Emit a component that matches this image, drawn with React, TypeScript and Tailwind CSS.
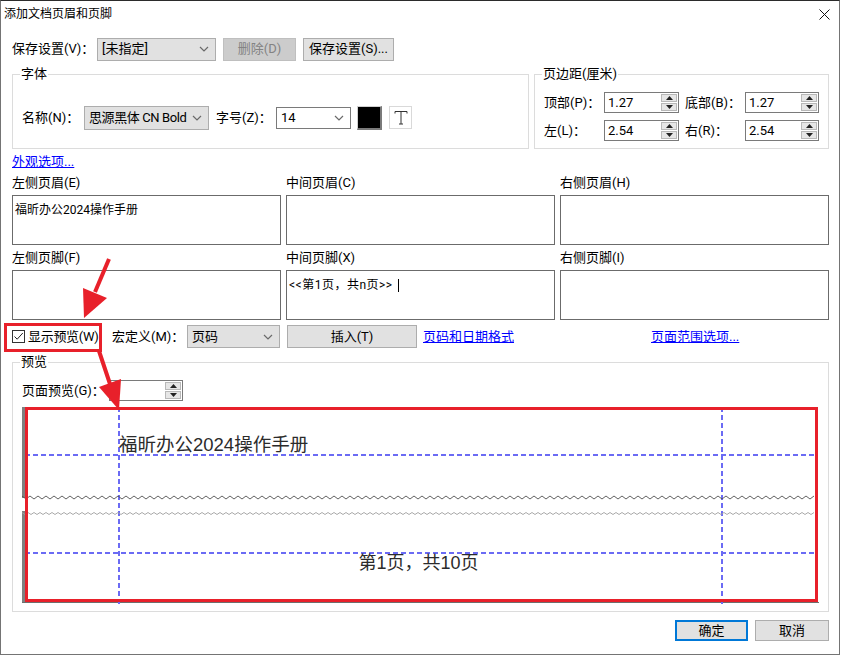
import React from 'react';

const Chevron = () => (
  <svg width="10" height="6" viewBox="0 0 10 6" className="shrink-0">
    <polyline points="1,1 5,5 9,1" fill="none" stroke="#6a6a6a" strokeWidth="1.2" />
  </svg>
);

const Tri = ({ up }: { up?: boolean }) => (
  <svg width="7" height="4" viewBox="0 0 7 4">
    <polygon points={up ? '0,4 7,4 3.5,0' : '0,0 7,0 3.5,4'} fill="#222" />
  </svg>
);

const Select = ({ text, className, textClass = '' }: { text: string; className: string; textClass?: string }) => (
  <div className={`flex items-center justify-between bg-[#e1e1e1] border border-[#adadad] pl-[4px] pr-[6px] ${className}`}>
    <span className={`whitespace-nowrap ${textClass}`}>{text}</span>
    <Chevron />
  </div>
);

const Button = ({ text, className }: { text: string; className: string }) => (
  <div className={`flex items-center justify-center bg-[#e1e1e1] border border-[#adadad] ${className}`}>{text}</div>
);

const Spin = ({ value, className }: { value: string; className: string }) => (
  <div className={`flex bg-white border border-[#7a7a7a] ${className}`}>
    <span className="flex-1 pl-[3px] text-[13px] leading-[19px]">{value}</span>
    <div className="w-[17px] flex flex-col gap-[1px] py-[1px] pr-[1px]">
      <div className="flex-1 flex items-center justify-center bg-[#e6e6e6] border border-[#b8b8b8]">
        <Tri up />
      </div>
      <div className="flex-1 flex items-center justify-center bg-[#e6e6e6] border border-[#b8b8b8]">
        <Tri />
      </div>
    </div>
  </div>
);

const Legend = ({ text }: { text: string }) => (
  <span className="absolute -top-[9px] left-[7px] bg-white px-[1px] leading-[16px]">{text}</span>
);

const zigzag = (y: number, amp: number, from: number, to: number, step: number) => {
  const pts: string[] = [];
  let up = true;
  for (let x = from; x <= to; x += step / 2) {
    pts.push(`${x},${up ? y - amp : y + amp}`);
    up = !up;
  }
  return pts.join(' ');
};

const PreviewCanvas = () => (
  <div className="relative mt-[6px] w-[797px] h-[197px] bg-white overflow-hidden">
    <div className="absolute left-0 top-0 w-[3px] h-[91px] bg-[#808080]" />
    <div className="absolute left-0 top-[104px] w-[3px] h-[92px] bg-[#808080]" />
    <div className="absolute left-0 right-0 top-[195px] h-[1px] bg-[#6e6e6e]" />
    <svg className="absolute left-0 top-0" width="797" height="197">
      <line x1="97" y1="0" x2="97" y2="197" stroke="#6b6bf4" strokeWidth="2" strokeDasharray="5 3" />
      <line x1="700" y1="0" x2="700" y2="197" stroke="#6b6bf4" strokeWidth="2" strokeDasharray="5 3" />
      <line x1="3" y1="48" x2="793" y2="48" stroke="#6b6bf4" strokeWidth="2" strokeDasharray="5 3" />
      <line x1="3" y1="146" x2="793" y2="146" stroke="#6b6bf4" strokeWidth="2" strokeDasharray="5 3" />
      <polyline points={zigzag(90.5, 1.5, 0, 794, 8)} fill="none" stroke="#505050" strokeWidth="0.9" />
      <polyline points={zigzag(106.5, 1, 0, 794, 6)} fill="none" stroke="#a0a0a0" strokeWidth="0.9" />
    </svg>
    <span className="absolute left-[97px] top-[27px] text-[18.5px] leading-[22px] text-[#2b2b2b] whitespace-nowrap font-['Liberation_Sans','Noto_Sans_CJK_SC',sans-serif]">
      福昕办公2024操作手册
    </span>
    <span className="absolute left-0 right-[4px] top-[145px] text-center text-[18px] leading-[22px] text-[#2b2b2b] font-['Liberation_Sans','Noto_Sans_CJK_SC',sans-serif]">
      第1页，共10页
    </span>
    <div className="absolute left-[3px] top-0 w-[793px] h-[195px] border-[3px] border-[#e8202a]" />
  </div>
);

export default function App() {
  return (
    <div className="relative w-[840px] h-[655px] bg-white border border-[#747474] border-t-[#2b2b2b] text-[13px] text-black font-['Roboto','Noto_Sans_CJK_SC',sans-serif]">
      <div className="h-[26px] flex items-center justify-between pl-[3px] pr-[9px]">
        <span className="text-[12px]">添加文档页眉和页脚</span>
        <svg width="11" height="11" viewBox="0 0 11 11">
          <path d="M0.5 0.5 L10.5 10.5 M10.5 0.5 L0.5 10.5" stroke="#111" strokeWidth="1" />
        </svg>
      </div>

      <div className="pl-[11px] pr-[10px]">
        <div className="mt-[10px] h-[24px] flex items-center">
          <span className="w-[85px]">保存设置(V)：</span>
          <Select text="[未指定]" className="w-[119px] h-[23px]" />
          <div className="ml-[7px] w-[73px] h-[23px] flex items-center justify-center bg-[#cccccc] border border-[#bfbfbf] text-[#838383]">
            删除(D)
          </div>
          <Button text="保存设置(S)..." className="ml-[7px] w-[91px] h-[23px]" />
        </div>

        <div className="mt-[13px] flex gap-[5px]">
          <div className="relative w-[517px] h-[75px] border border-[#dcdcdc]">
            <Legend text="字体" />
            <div className="pt-[30px] flex items-center h-[55px]">
              <span className="ml-[9px] w-[62px]">名称(N)：</span>
              <Select text="思源黑体 CN Bold" className="w-[125px] h-[24px]" textClass="tracking-[-0.4px]" />
              <span className="ml-[7px] w-[60px]">字号(Z)：</span>
              <div className="w-[75px] h-[22px] flex items-center justify-between bg-white border border-[#7a7a7a] pl-[4px] pr-[6px]">
                <span>14</span>
                <Chevron />
              </div>
              <div className="ml-[6px] w-[25px] h-[24px] bg-black border-t border-l border-t-[#d0d0d0] border-l-[#d0d0d0] border-r-2 border-b-2 border-r-[#7a7a7a] border-b-[#7a7a7a]" />
              <div className="ml-[7px] w-[23px] h-[23px] flex items-center justify-center bg-white border border-[#d9d9d9]">
                <svg width="14" height="15" viewBox="0 0 14 15">
                  <path d="M1 3.5 V1.5 H13 V3.5 M7 1.5 V14 M5 14 H9" fill="none" stroke="#333" strokeWidth="1" />
                </svg>
              </div>
            </div>
          </div>

          <div className="relative w-[295px] h-[75px] border border-[#dcdcdc]">
            <Legend text="页边距(厘米)" />
            <div className="pt-[17px] pl-[9px]">
              <div className="flex items-center h-[21px]">
                <span className="w-[60px]">顶部(P)：</span>
                <Spin value="1.27" className="w-[75px] h-[21px]" />
                <span className="ml-[6px] w-[60px]">底部(B)：</span>
                <Spin value="1.27" className="w-[74px] h-[21px]" />
              </div>
              <div className="mt-[7px] flex items-center h-[21px]">
                <span className="w-[60px]">左(L)：</span>
                <Spin value="2.54" className="w-[75px] h-[21px]" />
                <span className="ml-[6px] w-[60px]">右(R)：</span>
                <Spin value="2.54" className="w-[74px] h-[21px]" />
              </div>
            </div>
          </div>
        </div>

        <div className="mt-[5px] h-[16px] leading-[16px]">
          <span className="text-[#0000ff] underline">外观选项...</span>
        </div>

        <div className="grid grid-cols-3 gap-x-[5px]">
          {['左侧页眉(E)', '中间页眉(C)', '右侧页眉(H)'].map((t) => (
            <div key={t} className="mt-[5px] h-[16px] leading-[16px]">{t}</div>
          ))}
          <div className="mt-[4px] h-[50px] border border-[#6b6b6b] pl-[2px] pt-[6px] text-[12px] leading-[16px]">
            福昕办公2024操作手册
          </div>
          <div className="mt-[4px] h-[50px] border border-[#6b6b6b]" />
          <div className="mt-[4px] h-[50px] border border-[#6b6b6b]" />
          {['左侧页脚(F)', '中间页脚(X)', '右侧页脚(I)'].map((t) => (
            <div key={t} className="mt-[5px] h-[16px] leading-[16px]">{t}</div>
          ))}
          <div className="mt-[4px] h-[50px] border border-[#6b6b6b]" />
          <div className="mt-[4px] h-[50px] border border-[#6b6b6b] pl-[2px] pt-[6px] text-[12px] leading-[16px]">
            <div className="flex items-center">
              <span className="tracking-[0.5px]">&lt;&lt;第1页，共n页&gt;&gt;</span>
              <span className="ml-[5px] w-[1px] h-[13px] bg-black" />
            </div>
          </div>
          <div className="mt-[4px] h-[50px] border border-[#6b6b6b]" />
        </div>

        <div className="mt-[5px] h-[23px] flex items-center">
          <div className="w-[100px] flex items-center">
            <div className="w-[13px] h-[13px] border border-[#333] flex items-center justify-center">
              <svg width="11" height="11" viewBox="0 0 11 11">
                <path d="M1.5 5.5 L4.2 8.2 L9.8 2" fill="none" stroke="#222" strokeWidth="1" />
              </svg>
            </div>
            <span className="ml-[3px] whitespace-nowrap tracking-[-0.3px]">显示预览(W)</span>
          </div>
          <span className="w-[75px]">宏定义(M)：</span>
          <Select text="页码" className="w-[93px] h-[23px]" />
          <Button text="插入(T)" className="ml-[7px] w-[130px] h-[23px]" />
          <span className="ml-[6px] w-[228px] text-[#0000ff]">
            <span className="underline">页码和日期格式</span>
          </span>
          <span className="text-[#0000ff] underline">页面范围选项...</span>
        </div>

        <div className="relative mt-[14px] h-[250px] border border-[#dcdcdc] pt-[17px] pl-[9px]">
          <Legend text="预览" />
          <div className="flex items-center h-[21px]">
            <span className="w-[87px]">页面预览(G)：</span>
            <Spin value="" className="w-[74px] h-[21px]" />
          </div>
          <PreviewCanvas />
        </div>

        <div className="mt-[8px] flex justify-end gap-[7px]">
          <div className="w-[73px] h-[21px] flex items-center justify-center bg-[#e1e1e1] border-2 border-[#0078d7]">确定</div>
          <Button text="取消" className="w-[74px] h-[21px]" />
        </div>
      </div>

      <svg className="absolute -left-[1px] -top-[1px] pointer-events-none" width="841" height="655">
        <rect x="5.5" y="324.5" width="95" height="26" fill="none" stroke="#e8202a" strokeWidth="3" />
        <line x1="109" y1="259" x2="95" y2="292" stroke="#e8202a" strokeWidth="4" />
        <polygon points="84,318 83,288 107,298" fill="#e8202a" />
        <line x1="99" y1="351" x2="110" y2="384" stroke="#e8202a" strokeWidth="4" />
        <polygon points="119,410 99,387 121,379" fill="#e8202a" />
      </svg>
    </div>
  );
}
